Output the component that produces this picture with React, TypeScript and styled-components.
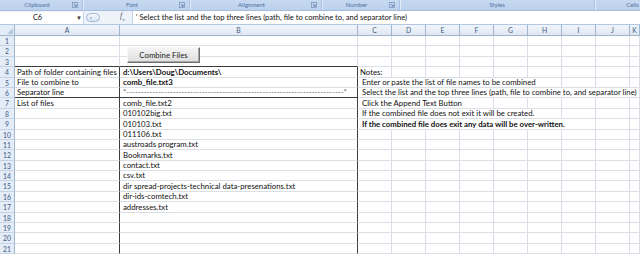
import React from "react";
import styled, { createGlobalStyle } from "styled-components";

const Colors = {
  ribbon: "#c6d9f1",
  ribbonText: "#4f6f9f",
  ribbonEdge: "#a3bde0",
  headerBorder: "#9eb6ce",
  headerText: "#415b82",
  grid: "#d9dee7",
  dark: "#3c3c3c",
  text: "#111",
};

const FONT = `Lato, "Liberation Sans", "DejaVu Sans", sans-serif`;

const GlobalStyle = createGlobalStyle`
  html, body { margin: 0; padding: 0; background: #fff; }
  body {
    width: 640px;
    height: 256px;
    overflow: hidden;
    font-family: ${FONT};
    color: ${Colors.text};
  }
`;

interface RowData {
  a?: string;
  b?: string;
  bBold?: boolean;
  separator?: boolean;
  c?: string;
  cBold?: boolean;
  cSpan?: number;
  cIndent?: number;
}

const DASHES = "-".repeat(75);

const rows: RowData[] = [
  {},
  {},
  {},
  { a: "Path of folder containing files", b: "d:\\Users\\Doug\\Documents\\", bBold: true, c: "Notes:", cIndent: 2 },
  { a: "File to combine to", b: "comb_file.txt3", bBold: true, c: "Enter or paste the list of file names to be combined", cSpan: 6, cIndent: 4 },
  { a: "Separator line", separator: true, c: "Select the list and the top three lines (path, file to combine to, and separator line)", cSpan: 9, cIndent: 4 },
  { a: "List of files", b: "comb_file.txt2", c: "Click the Append Text Button", cSpan: 4, cIndent: 4 },
  { b: "010102big.txt", c: "If the combined file does not exit it will be created.", cSpan: 6, cIndent: 4 },
  { b: "010103.txt", c: "If the combined file does exit any data will be over-written.", cBold: true, cSpan: 7, cIndent: 4 },
  { b: "011106.txt" },
  { b: "austroads program.txt" },
  { b: "Bookmarks.txt" },
  { b: "contact.txt" },
  { b: "csv.txt" },
  { b: "dir spread-projects-technical data-presenations.txt" },
  { b: "dir-ids-comtech.txt" },
  { b: "addresses.txt" },
  {},
  {},
  {},
  {},
];

const COLUMN_LETTERS = ["A", "B", "C", "D", "E", "F", "G", "H", "I", "J", "K"];
const TRAILING_COLS = 9; // C..K

const ribbonGroups = [
  { label: "Clipboard", width: 83, launcher: true },
  { label: "Font", width: 107, launcher: true },
  { label: "Alignment", width: 132, launcher: true },
  { label: "Number", width: 78, launcher: true },
  { label: "Styles", width: 195, launcher: false },
  { label: "Cells", width: 76, launcher: false },
];

const Launcher: React.FC = () => (
  <svg width="6" height="6" viewBox="0 0 6 6">
    <rect x="0.5" y="0.5" width="5" height="5" fill="none" stroke="#7d97bd" strokeWidth="0.8" />
    <path d="M2 2 L4.2 4.2 M4.2 2.6 V4.2 H2.6" stroke="#5a77a3" strokeWidth="0.8" fill="none" />
  </svg>
);

const RibbonBar: React.FC = () => (
  <Ribbon>
    {ribbonGroups.map((g) => (
      <RibbonGroup key={g.label} $width={g.width}>
        <GroupLabel>{g.label}</GroupLabel>
        {g.launcher && (
          <LauncherSlot>
            <Launcher />
          </LauncherSlot>
        )}
      </RibbonGroup>
    ))}
  </Ribbon>
);

const FormulaRow: React.FC = () => (
  <FormulaBar>
    <NameBox>
      <NameText>C6</NameText>
      <DropArrow>▾</DropArrow>
    </NameBox>
    <Pill>
      <PillDot />
    </Pill>
    <FxLabel>
      <i>f</i>
      <sub>x</sub>
    </FxLabel>
    <FormulaInput>' Select the list and the top three lines (path, file to combine to, and separator line)</FormulaInput>
  </FormulaBar>
);

const SheetRow: React.FC<{ index: number; row: RowData }> = ({ index, row }) => {
  const span = row.c ? row.cSpan ?? 1 : 1;
  const inBox = index >= 3;
  const boxTop = index === 2;
  const boxBottom = index === 5;
  const rest = TRAILING_COLS - span;

  return (
    <>
      <RowHeader>{index + 1}</RowHeader>
      <Cell $rightDark={inBox} $bottomDark={boxTop || boxBottom} $indent={2}>
        {row.a}
      </Cell>
      <Cell $rightDark={inBox} $bottomDark={boxTop || boxBottom} $bold={row.bBold}>
        {row.separator ? <Separator>*{DASHES}*</Separator> : row.b}
      </Cell>
      <Cell $span={span} $bold={row.cBold} $indent={row.cIndent}>
        {row.c}
      </Cell>
      {Array.from({ length: rest }).map((_, i) => (
        <Cell key={i} />
      ))}
    </>
  );
};

export default function App() {
  return (
    <>
      <GlobalStyle />
      <Window>
        <RibbonBar />
        <FormulaRow />
        <SheetWrap>
          <Grid>
            <Corner>
              <CornerMark />
            </Corner>
            {COLUMN_LETTERS.map((l) => (
              <ColHeader key={l}>{l}</ColHeader>
            ))}
            {rows.map((row, i) => (
              <SheetRow key={i} index={i} row={row} />
            ))}
          </Grid>
          <FormButton>Combine Files</FormButton>
        </SheetWrap>
      </Window>
    </>
  );
}

const Window = styled.div`
  width: 640px;
  height: 256px;
  overflow: hidden;
  display: flex;
  flex-direction: column;
`;

const Ribbon = styled.div`
  height: 11px;
  display: flex;
  background: linear-gradient(${Colors.ribbon}, #bcd1ed);
  border-bottom: 1px solid ${Colors.ribbonEdge};
  box-sizing: border-box;
  overflow: hidden;
  flex-shrink: 0;
`;

const RibbonGroup = styled.div<{ $width: number }>`
  width: ${(p) => p.$width}px;
  flex-shrink: 0;
  display: flex;
  align-items: center;
  padding: 0 4px;
  box-sizing: border-box;
  border-right: 1px solid #a9c1e2;
  box-shadow: 1px 0 0 #e3edf9;
`;

const GroupLabel = styled.span`
  flex: 1;
  text-align: center;
  font-size: 6px;
  color: ${Colors.ribbonText};
  line-height: 10px;
`;

const LauncherSlot = styled.span`
  display: flex;
  align-items: center;
  margin-left: 2px;
`;

const FormulaBar = styled.div`
  height: 14px;
  display: flex;
  align-items: center;
  background: #eef3fa;
  border-bottom: 1px solid #b4c8e3;
  box-sizing: border-box;
  flex-shrink: 0;
`;

const NameBox = styled.div`
  width: 84px;
  height: 12px;
  background: #fff;
  border-right: 1px solid #c3d3e8;
  display: flex;
  align-items: center;
  box-sizing: border-box;
`;

const NameText = styled.span`
  flex: 1;
  text-align: center;
  font-size: 7.2px;
`;

const DropArrow = styled.span`
  width: 8px;
  font-size: 7px;
  color: #333;
  text-align: center;
`;

const Pill = styled.div`
  width: 14px;
  height: 9px;
  margin-left: 2px;
  border-radius: 5px;
  border: 1px solid #9fb7d7;
  background: linear-gradient(#f6f9fd, #d8e4f3);
  display: flex;
  align-items: center;
  padding-left: 3px;
  box-sizing: border-box;
`;

const PillDot = styled.span`
  width: 2px;
  height: 2px;
  border-radius: 1px;
  background: #a8b8cc;
`;

const FxLabel = styled.span`
  width: 12px;
  margin-left: 20px;
  font-family: "Liberation Serif", serif;
  font-size: 8px;
  color: #555;
  line-height: 8px;
  sub {
    font-size: 5px;
  }
`;

const FormulaInput = styled.div`
  flex: 1;
  height: 13px;
  background: #fff;
  border-left: 1px solid #c3d3e8;
  padding-left: 3px;
  font-size: 7.6px;
  line-height: 13px;
  white-space: nowrap;
  overflow: hidden;
`;

const SheetWrap = styled.div`
  position: relative;
  flex: 1;
  overflow: hidden;
`;

const Grid = styled.div`
  display: grid;
  grid-template-columns: 15px 105px 238px repeat(8, 34px) 1fr;
  grid-template-rows: 11px;
  grid-auto-rows: 10.4px;
`;

const Corner = styled.div`
  background: #e4ecf7;
  border-right: 1px solid ${Colors.headerBorder};
  border-bottom: 1px solid ${Colors.headerBorder};
  box-sizing: border-box;
  position: relative;
`;

const CornerMark = styled.span`
  position: absolute;
  right: 1px;
  bottom: 1px;
  width: 0;
  height: 0;
  border-left: 6px solid transparent;
  border-bottom: 6px solid #b8c9de;
`;

const ColHeader = styled.div`
  background: linear-gradient(#f1f5fb, #dfe7f2);
  border-right: 1px solid ${Colors.headerBorder};
  border-bottom: 1px solid ${Colors.headerBorder};
  box-sizing: border-box;
  font-size: 6.8px;
  line-height: 10px;
  text-align: center;
  color: ${Colors.headerText};
`;

const RowHeader = styled.div`
  background: #e4ecf7;
  border-right: 1px solid ${Colors.headerBorder};
  border-bottom: 1px solid #c5d3e4;
  box-sizing: border-box;
  font-size: 6.8px;
  line-height: 10px;
  text-align: center;
  color: ${Colors.headerText};
`;

const Cell = styled.div<{
  $span?: number;
  $rightDark?: boolean;
  $bottomDark?: boolean;
  $bold?: boolean;
  $indent?: number;
}>`
  grid-column: span ${(p) => p.$span ?? 1};
  box-sizing: border-box;
  min-width: 0;
  border-right: 1px solid ${(p) => (p.$rightDark ? Colors.dark : Colors.grid)};
  border-bottom: 1px solid ${(p) => (p.$bottomDark ? Colors.dark : Colors.grid)};
  padding-left: ${(p) => p.$indent ?? 3}px;
  font-size: 7.8px;
  font-weight: ${(p) => (p.$bold ? 700 : 400)};
  line-height: 9px;
  white-space: nowrap;
  display: flex;
  align-items: flex-end;
`;

const Separator = styled.span`
  color: #6a6a6a;
`;

const FormButton = styled.button`
  position: absolute;
  left: 127px;
  top: 22px;
  width: 73px;
  height: 16px;
  padding: 0;
  font-family: ${FONT};
  font-size: 7.8px;
  color: #222;
  background: linear-gradient(#f4f4f4, #dedede);
  border: 1px solid;
  border-color: #f8f8f8 #6e6e6e #6e6e6e #f8f8f8;
  box-shadow: inset -1px -1px 0 #a8a8a8;
  cursor: default;
`;
